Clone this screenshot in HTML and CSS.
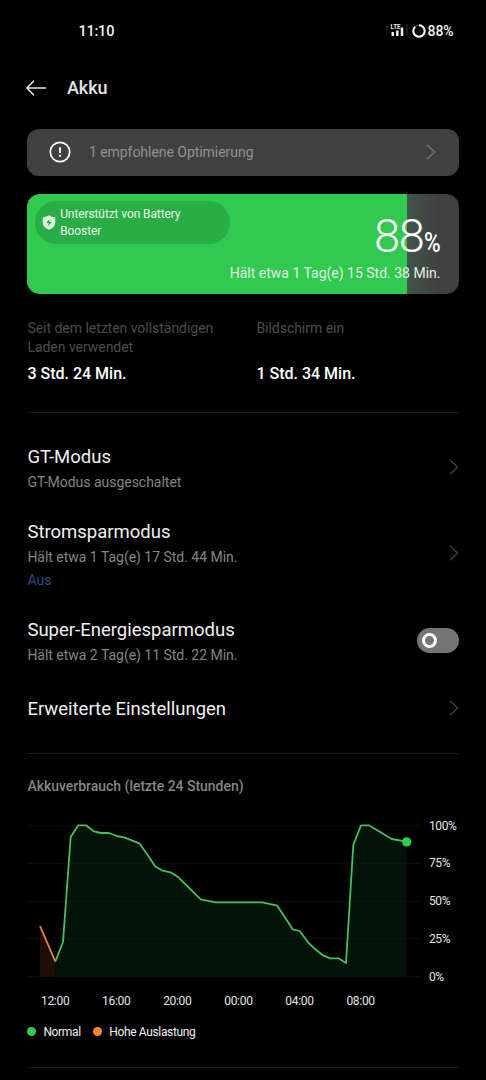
FILE: index.html
```html
<!DOCTYPE html>
<html lang="de">
<head>
    <meta charset="UTF-8">
    <meta name="viewport" content="width=device-width, initial-scale=1.0">
    <title>Akku</title>
    <link rel="stylesheet" href="styles.css">
</head>
<body>
    <div class="statusbar">
        <span class="clock">11:10</span>
        <div class="status-icons">
            <svg class="signal" width="22" height="16" viewBox="0 0 22 16">
                <path d="M1 3v1.500M1 6v1.500" stroke="#333" stroke-width="2"/>
                <text x="4.500" y="6" class="lte" textLength="10" lengthAdjust="spacingAndGlyphs">LTE</text>
                <path d="M6.800 9v4M11.300 7.500v5.500M16 4.500v8.500" stroke="#eee" stroke-width="2.500"/>
                <path d="M20.800 1.500v11.500" stroke="#262626" stroke-width="1.500"/>
            </svg>
            <svg class="ring" width="14" height="14" viewBox="0 0 14 14">
                <circle cx="7" cy="7" r="5.700" fill="none" stroke="#3a3a3a" stroke-width="2"/>
                <circle cx="7" cy="7" r="5.700" fill="none" stroke="#fff" stroke-width="2" pathLength="100" stroke-dasharray="88 12" transform="rotate(-90 7 7)"/>
            </svg>
            <span class="status-pct">88%</span>
        </div>
    </div>

    <header class="header">
        <svg width="21" height="16" viewBox="0 0 21 16">
            <path d="M8 .8L.9 8 8 15.200M.9 8H20" fill="none" stroke="#e4e4e4" stroke-width="1.500"/>
        </svg>
        <h1>Akku</h1>
    </header>

    <div class="tip">
        <svg width="22" height="22" viewBox="0 0 22 22">
            <circle cx="11" cy="11" r="9.700" fill="none" stroke="#fff" stroke-width="1.700"/>
            <path d="M11 6.200v5.800M11 13.800v2" stroke="#fff" stroke-width="1.800"/>
        </svg>
        <span>1 empfohlene Optimierung</span>
        <svg class="chevron" width="10" height="16" viewBox="0 0 10 16">
            <path d="M1 .7L8.500 8 1 15.300"/>
        </svg>
    </div>

    <div class="battery">
        <div class="booster">
            <svg width="14" height="15" viewBox="0 0 14 15">
                <path d="M7 .3C9 1.600 11 2.200 13.300 2.400V7.500c0 3.300-2.400 5.800-6.300 7.200C3.100 13.300.7 10.800.7 7.500V2.400C3 2.200 5 1.600 7 .3z" fill="#d9f7df"/>
                <path d="M7.800 3.800L4.300 8h2.400l-.6 3.200L9.700 7H7.200z" fill="#28a745"/>
            </svg>
            <span>Unterstützt von Battery Booster</span>
        </div>
        <div class="level">88<span>%</span></div>
        <div class="remaining">Hält etwa 1 Tag(e) 15 Std. 38 Min.</div>
    </div>

    <div class="stats">
        <div class="stat">
            <p>Seit dem letzten vollständigen Laden verwendet</p>
            <strong>3 Std. 24 Min.</strong>
        </div>
        <div class="stat">
            <p>Bildschirm ein</p>
            <strong>1 Std. 34 Min.</strong>
        </div>
    </div>

    <div class="list">
        <div class="item gt">
            <div>
                <h2>GT-Modus</h2>
                <p>GT-Modus ausgeschaltet</p>
            </div>
            <svg class="chevron" width="10" height="16" viewBox="0 0 10 16">
                <path d="M1 .7L8.500 8 1 15.300"/>
            </svg>
        </div>
        <div class="item saver">
            <div>
                <h2>Stromsparmodus</h2>
                <p>Hält etwa 1 Tag(e) 17 Std. 44 Min.</p>
                <p class="state">Aus</p>
            </div>
            <svg class="chevron" width="10" height="16" viewBox="0 0 10 16">
                <path d="M1 .7L8.500 8 1 15.300"/>
            </svg>
        </div>
        <div class="item super">
            <div>
                <h2>Super-Energiesparmodus</h2>
                <p>Hält etwa 2 Tag(e) 11 Std. 22 Min.</p>
            </div>
            <div class="switch"></div>
        </div>
        <div class="item more">
            <h2>Erweiterte Einstellungen</h2>
            <svg class="chevron" width="10" height="16" viewBox="0 0 10 16">
                <path d="M1 .7L8.500 8 1 15.300"/>
            </svg>
        </div>
    </div>

    <div class="usage">
        <h3>Akkuverbrauch (letzte 24 Stunden)</h3>
        <div class="chart">
            <svg width="402" height="187" viewBox="0 0 402 187">
                <path class="grid" d="M0 18.500h393M0 56.500h393M0 94.500h393M0 131.500h393M0 169.500h393"/>
                <path d="M13 119L28.300 154.500V170H13z" fill="#1c0e05"/>
                <path d="M28.300 154.500L36 135 43.700 30 51.300 18.300H59L66.700 24.300 74.300 26H82L89.700 29 97.300 30.300 112.700 36.700 120.700 48 128 59.300 135.700 63.700 143.300 65.300 150.700 69.700 173.700 92.300 188.700 95.300H235.300L250.300 98.700 265.700 122.300 272.700 124 281 135.300 288.300 142.300 296 148.300 303.300 151.300H311.300L319 156 326.300 38 334 18.300H342L364.700 32 379.700 34.700V170H28.300z" fill="#041309"/>
                <path class="grid inner" d="M44 56.500h81M325 56.500h55M40 94.500h148M323 94.500h57M37 131.500h241M321 131.500h59"/>
                <path d="M13 119L28.300 154.500" class="line high"/>
                <path d="M28.300 154.500L36 135 43.700 30 51.300 18.300H59L66.700 24.300 74.300 26H82L89.700 29 97.300 30.300 112.700 36.700 120.700 48 128 59.300 135.700 63.700 143.300 65.300 150.700 69.700 173.700 92.300 188.700 95.300H235.300L250.300 98.700 265.700 122.300 272.700 124 281 135.300 288.300 142.300 296 148.300 303.300 151.300H311.300L319 156 326.300 38 334 18.300H342L364.700 32 379.700 34.700" class="line"/>
                <circle cx="379.700" cy="34.900" r="4.700" fill="#30ca50"/>
            </svg>
            <div class="y-axis">
                <span>100%</span>
                <span>75%</span>
                <span>50%</span>
                <span>25%</span>
                <span>0%</span>
            </div>
        </div>
        <div class="x-axis">
            <span>12:00</span>
            <span>16:00</span>
            <span>20:00</span>
            <span>00:00</span>
            <span>04:00</span>
            <span>08:00</span>
        </div>
        <div class="legend">
            <span class="dot"></span>
            <span class="normal">Normal</span>
            <span class="dot orange"></span>
            <span>Hohe Auslastung</span>
        </div>
    </div>
</body>
</html>
```

FILE: styles.css
```css
* {
    box-sizing: border-box;
}

body {
    margin: 0;
    padding: 0 27.500px 0 27.400px;
    height: 1080px;
    overflow: hidden;
    background: #000;
    color: #f0f0f0;
    font-family: Roboto, sans-serif;
}

h1, h2, h3, p {
    margin: 0;
    font-weight: 400;
}

svg {
    display: block;
    flex: none;
}

.statusbar {
    display: flex;
    justify-content: space-between;
    align-items: center;
    height: 62px;
    padding: 0 5px 0 51px;
}

.clock {
    font-size: 14.500px;
    font-weight: 500;
    letter-spacing: -.2px;
}

.status-icons {
    display: flex;
    align-items: center;
}

.signal {
    margin-right: 4px;
}

.lte {
    font-size: 7px;
    font-weight: 700;
    fill: #eee;
}

.status-pct {
    margin-left: 2px;
    font-size: 14px;
    font-weight: 500;
    letter-spacing: -.1px;
}

.header {
    display: flex;
    align-items: center;
    gap: 18.500px;
    height: 51px;
}

.header svg {
    margin-left: -1px;
    margin-right: 1px;
}

.header h1 {
    font-size: 18px;
    font-weight: 500;
    color: #e4e4e4;
}

.tip {
    display: flex;
    align-items: center;
    height: 47px;
    margin-top: 15.500px;
    padding: 0 22.500px 0 22px;
    border-radius: 12px;
    background: #404040;
    color: #929292;
    font-size: 14px;
    letter-spacing: -.04px;
}

.tip span {
    flex: 1;
    margin-left: 17.500px;
}

.chevron path {
    fill: none;
    stroke: #3d3d3d;
    stroke-width: 1.500;
}

.tip .chevron path {
    stroke: #707070;
}

.battery {
    display: flex;
    flex-direction: column;
    position: relative;
    height: 100px;
    margin-top: 18px;
    border-radius: 13px;
    background: linear-gradient(90deg, #30ca50 380px, #42544a 380px, #404040 411px);
}

.booster {
    display: flex;
    align-items: center;
    gap: 4.500px;
    width: 195px;
    height: 43px;
    margin: 7px 0 0 7.300px;
    padding-left: 7px;
    border-radius: 21px;
    background: #2aac46;
    color: #e6fbe9;
    font-size: 12px;
    line-height: 17.500px;
    letter-spacing: -.1px;
}

.booster span {
    width: 135px;
    padding-top: 2px;
}

.level {
    display: flex;
    align-items: baseline;
    position: absolute;
    top: 15.500px;
    right: 18px;
    color: #fff;
    font-size: 47px;
    line-height: 54px;
    font-weight: 300;
    letter-spacing: -1.300px;
}

.level span {
    width: 17px;
    font-size: 27px;
    font-weight: 500;
    letter-spacing: 0;
    transform: scaleX(.84);
    transform-origin: left;
}

.remaining {
    margin: 19px 18px 0 0;
    text-align: right;
    color: #e2efe4;
    font-size: 14px;
    line-height: 20px;
}

.stats {
    display: grid;
    grid-template-columns: 229px 1fr;
    height: 119px;
    padding-top: 25px;
    border-bottom: 1px solid #1a1a1a;
}

.stat {
    display: flex;
    flex-direction: column;
}

.stat p {
    width: 200px;
    height: 39px;
    color: #4c4c4c;
    font-size: 14px;
    line-height: 19.500px;
    letter-spacing: -.03px;
}

.stat strong {
    margin-top: 5px;
    color: #fff;
    font-size: 16px;
    line-height: 22px;
    font-weight: 500;
}

.list {
    height: 341px;
    padding-top: 31px;
    border-bottom: 1px solid #1a1a1a;
}

.item {
    display: flex;
    justify-content: space-between;
    align-items: center;
}

.item h2 {
    font-size: 18.500px;
    line-height: 26px;
}

.item p {
    color: #858585;
    font-size: 14px;
    line-height: 24px;
    letter-spacing: -.02px;
}

.item .state {
    color: #2f4a85;
    line-height: 22px;
}

.gt .chevron,
.saver .chevron {
    margin-bottom: 3px;
}

.saver {
    margin-top: 25px;
}

.super {
    margin-top: 26.500px;
}

.more {
    margin-top: 28.500px;
}

.more .chevron {
    margin-bottom: 2px;
}

.switch {
    width: 42px;
    height: 25px;
    margin-bottom: 3px;
    padding: 5px;
    border-radius: 13px;
    background: #757575;
}

.switch::before {
    content: "";
    display: block;
    box-sizing: border-box;
    width: 15px;
    height: 15px;
    border: 3.500px solid #fff;
    border-radius: 50%;
}

.usage {
    height: 314px;
    padding-top: 22px;
    border-bottom: 1px solid #1a1a1a;
}

.usage h3 {
    height: 31px;
    color: #858585;
    font-size: 14px;
    font-weight: 500;
    line-height: 20px;
    letter-spacing: -.02px;
}

.chart {
    display: flex;
    height: 187px;
    margin-left: -.4px;
}

.grid {
    fill: none;
    stroke: #0b0b0b;
}

.grid.inner {
    stroke: #06190c;
}

.line {
    fill: none;
    stroke: #45bf60;
    stroke-width: 1.800;
    stroke-linejoin: round;
}

.line.high {
    stroke: #ef8347;
}

.y-axis {
    display: flex;
    flex-direction: column;
    padding-top: 1px;
    color: #e4e4e4;
    font-size: 12px;
    line-height: 37.800px;
    letter-spacing: -.4px;
}

.x-axis {
    display: grid;
    grid-template-columns: repeat(6, 61.100px);
    margin-left: -2.800px;
    text-align: center;
    color: #e4e4e4;
    font-size: 12px;
    line-height: 14px;
    letter-spacing: -.3px;
}

.legend {
    display: flex;
    align-items: center;
    height: 16px;
    margin-top: 16px;
    font-size: 12px;
    letter-spacing: -.35px;
}

.dot {
    width: 9px;
    height: 9px;
    margin-right: 7px;
    border-radius: 50%;
    background: #30ca50;
}

.dot.orange {
    background: #ff8533;
}

.normal {
    margin-right: 12.500px;
}
```
